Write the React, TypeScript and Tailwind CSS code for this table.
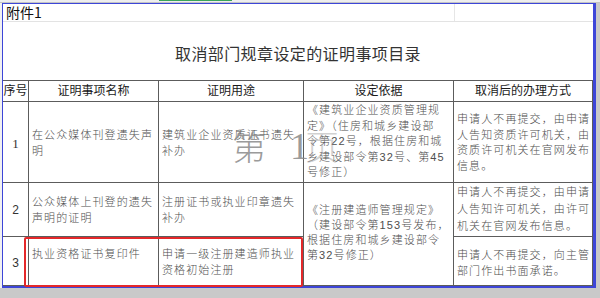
import React from "react";

const FONT = "font-['Liberation_Sans','Noto_Sans_CJK_SC',sans-serif]";

function Lines({ lines, lh = "leading-[15.5px]", extra = "" }: { lines: string[]; lh?: string; extra?: string }) {
  return (
    <div className={`flex flex-col ${extra}`}>
      {lines.map((l, i) => (
        <div key={i} className={`whitespace-nowrap ${lh}`}>
          {l === "" ? "\u00a0" : l}
        </div>
      ))}
    </div>
  );
}

const cell = "border-r border-b border-[#5c5c5c] overflow-hidden";
const body = "text-[11px] tracking-[1.1px] text-[#4e4e4e] font-light pl-[3px] flex flex-col justify-center";
const head = "text-[12px] text-[#1a1a1a] flex items-center justify-center";
const num = "flex items-center justify-center text-[12px] text-[#333]";

export default function App() {
  return (
    <div className={`relative w-[600px] h-[298px] bg-[#c9c9c9] overflow-hidden ${FONT}`}>
      <div className="h-[3px] bg-[#eeeeee] border-b border-[#c4c4c4] flex">
        <div className="w-[159px]" />
        <div className="w-[73px] bg-[#3aa55a] h-[1px]" />
      </div>
      <div className="flex">
        <div className="w-[2px] h-[285px] bg-[#f1f1f1]" />
        <div className="w-[594px] h-[285px] bg-white border-l border-t border-r-[3px] border-b-2 border-[#3d46d8] flex flex-col">
          <div className="h-[18px] border-b border-[#e3e3e3] flex shrink-0">
            <div className="w-[451px] pl-[3px] text-[14px] leading-[17px] text-[#111] font-['Noto_Sans_CJK_SC',sans-serif]">
              附件1
            </div>
            <div className="w-[139px] border-l border-[#e6e6e6]" />
          </div>
          <div className="h-[59px] border-b border-[#5c5c5c] flex items-center justify-center shrink-0 pt-[3px]">
            <span className="text-[16px] tracking-[0.4px] text-[#333] font-['Noto_Sans_CJK_SC',sans-serif]">
              取消部门规章设定的证明事项目录
            </span>
          </div>
          <div className="grid grid-cols-[26px_130px_145px_150px_139px] grid-rows-[21px_81px_54px_49px] shrink-0">
            <div className={`${cell} ${head} tracking-[0px]`}>序号</div>
            <div className={`${cell} ${head}`}>证明事项名称</div>
            <div className={`${cell} ${head}`}>证明用途</div>
            <div className={`${cell} ${head}`}>设定依据</div>
            <div className={`${cell} ${head}`}>取消后的办理方式</div>

            <div className={`${cell} ${num} font-['Liberation_Serif',serif] text-[13px] pt-[4px]`}>1</div>
            <div className={`${cell} ${body} pt-[3px]`}>
              <Lines lines={["在公众媒体刊登遗失声", "明"]} />
            </div>
            <div className={`${cell} ${body} pt-[3px]`}>
              <Lines lines={["建筑业企业资质证书遗失", "补办"]} />
            </div>
            <div className={`${cell} ${body}`}>
              <Lines
                lines={[
                  "《建筑业企业资质管理规",
                  "定》（住房和城乡建设部",
                  "令第22号，根据住房和城",
                  "乡建设部令第32号、第45",
                  "号修正）",
                ]}
              />
            </div>
            <div className={`${cell} ${body} pt-[2px]`}>
              <Lines
                lh="leading-[15.5px]"
                lines={["申请人不再提交，由申请", "人告知资质许可机关，由", "资质许可机关在官网发布", "信息。"]}
              />
            </div>

            <div className={`${cell} ${num}`}>2</div>
            <div className={`${cell} ${body}`}>
              <Lines lines={["公众媒体上刊登的遗失", "声明的证明"]} lh="leading-[16px]" />
            </div>
            <div className={`${cell} ${body}`}>
              <Lines lines={["注册证书或执业印章遗失", "补办"]} lh="leading-[16px]" />
            </div>
            <div className={`${cell} ${body} row-span-2 pb-[2px]`}>
              <Lines
                lh="leading-[15px]"
                lines={["《注册建造师管理规定》", "（建设部令第153号发布，", "根据住房和城乡建设部令", "第32号修正）"]}
              />
            </div>
            <div className={`${cell} ${body}`}>
              <Lines
                lh="leading-[17px]"
                lines={["申请人不再提交，由申请", "人告知许可机关，由许可", "机关在官网发布信息。"]}
              />
            </div>

            <div className={`${cell} ${num} pt-[4px]`}>3</div>
            <div className={`${cell} ${body} pt-[2px]`}>
              <Lines lines={["执业资格证书复印件", ""]} lh="leading-[16px]" />
            </div>
            <div className={`${cell} ${body} pt-[2px]`}>
              <Lines lines={["申请一级注册建造师执业", "资格初始注册"]} lh="leading-[16px]" />
            </div>
            <div className={`${cell} ${body} pt-[4px]`}>
              <Lines lines={["申请人不再提交，向主管", "部门作出书面承诺。"]} lh="leading-[16px]" />
            </div>
          </div>
        </div>
      </div>

      {/* watermark */}
      <div className="absolute left-[232px] top-[129px] text-[34px] leading-none text-[#8a8a8a] opacity-85 font-['Noto_Sans_CJK_SC',sans-serif] font-light pointer-events-none">
        第
      </div>
      <div className="absolute left-[290px] top-[127px] text-[38px] leading-none text-[#8a8a8a] opacity-85 font-['Liberation_Serif',serif] pointer-events-none">
        1
      </div>
      <div className="absolute left-[305px] top-[129px] text-[34px] leading-none text-[#9a9a9a] opacity-45 font-['Noto_Sans_CJK_SC',sans-serif] font-light pointer-events-none">
        页
      </div>

      {/* red highlight */}
      <div className="absolute left-[24px] top-[237px] w-[279px] h-[50px] border-2 border-[#e4282a] rounded-[2px] pointer-events-none" />
    </div>
  );
}
